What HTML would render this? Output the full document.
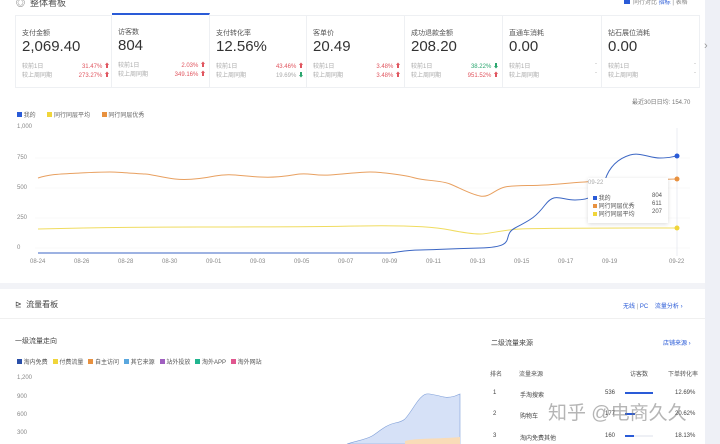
<!DOCTYPE html>
<html><head><meta charset="utf-8"><style>
*{margin:0;padding:0;box-sizing:border-box}
body{width:720px;height:444px;overflow:hidden;background:#fff;font-family:"Liberation Sans","Noto Sans CJK SC",sans-serif;position:relative;color:#333}
.a{position:absolute;white-space:nowrap}
.card{position:absolute;top:15px;height:73px;border:1px solid #eef0f3;border-left:none;background:#fff}
.card .t{position:absolute;left:6px;top:12px;font-size:7px;color:#555}
.card .v{position:absolute;left:6px;top:22px;font-size:15px;color:#333}
.card .s{position:absolute;left:6px;font-size:6px;color:#aaa;width:88px}
.card .s b{position:absolute;right:0;font-weight:normal}
.r{color:#e0555f}.g{color:#2aa56e}
.ax{font-size:6px;color:#888}
</style></head><body>
<div class="a" style="left:705px;top:0;width:15px;height:444px;background:#eef0f6"></div>
<div class="a" style="left:16px;top:-4px;font-size:9px;color:#555">◎ &nbsp;整体看板</div>
<div class="a" style="left:624px;top:-2px;width:6px;height:6px;background:#2a5bd7"></div>
<div class="a" style="left:633px;top:-3px;font-size:6px;color:#888">同行对比 <span style="color:#2a5bd7">指标</span> | 表格</div>
<div class="card" style="left:15px;width:97px;border-left:1px solid #eef0f3"><div class="t">支付金额</div><div class="v">2,069.40</div><div class="s" style="top:45px">较前1日<b class="r">31.47% ⬆</b></div><div class="s" style="top:54px">较上周同期<b class="r">273.27% ⬆</b></div></div>
<div class="card" style="left:112px;width:98px;top:13px;height:75px;border-top:2px solid #2a5bd7"><div class="t">访客数</div><div class="v">804</div><div class="s" style="top:45px">较前1日<b class="r">2.03% ⬆</b></div><div class="s" style="top:54px">较上周同期<b class="r">349.16% ⬆</b></div></div>
<div class="card" style="left:210px;width:97px"><div class="t">支付转化率</div><div class="v">12.56%</div><div class="s" style="top:45px">较前1日<b class="r">43.46% ⬆</b></div><div class="s" style="top:54px">较上周同期<b style="color:#aaa">19.69% <span class="g">⬇</span></b></div></div>
<div class="card" style="left:307px;width:98px"><div class="t">客单价</div><div class="v">20.49</div><div class="s" style="top:45px">较前1日<b class="r">3.48% ⬆</b></div><div class="s" style="top:54px">较上周同期<b class="r">3.48% ⬆</b></div></div>
<div class="card" style="left:405px;width:98px"><div class="t">成功退款金额</div><div class="v">208.20</div><div class="s" style="top:45px">较前1日<b class="g">38.22% ⬇</b></div><div class="s" style="top:54px">较上周同期<b class="r">951.52% ⬆</b></div></div>
<div class="card" style="left:503px;width:99px"><div class="t">直通车消耗</div><div class="v">0.00</div><div class="s" style="top:45px">较前1日<b>-</b></div><div class="s" style="top:54px">较上周同期<b>-</b></div></div>
<div class="card" style="left:602px;width:98px"><div class="t">钻石展位消耗</div><div class="v">0.00</div><div class="s" style="top:45px">较前1日<b>-</b></div><div class="s" style="top:54px">较上周同期<b>-</b></div></div>
<div class="a" style="left:704px;top:40px;font-size:11px;color:#999">›</div>
<div class="a" style="left:632px;top:97px;font-size:6px;color:#777">最近30日日均: 154.70</div>
<div class="a" style="left:17px;top:110px;font-size:6px;color:#666"><span style="display:inline-block;width:5px;height:5px;background:#2a5bd7"></span> 我的 &nbsp;&nbsp;&nbsp;&nbsp;&nbsp; <span style="display:inline-block;width:5px;height:5px;background:#f0d53a"></span> 同行同层平均 &nbsp;&nbsp;&nbsp;&nbsp;&nbsp; <span style="display:inline-block;width:5px;height:5px;background:#e8913f"></span> 同行同层优秀</div>
<div class="a ax" style="left:17px;top:124px">1,000</div>
<div class="a ax" style="left:17px;top:155px">750</div>
<div class="a ax" style="left:17px;top:185px">500</div>
<div class="a ax" style="left:17px;top:215px">250</div>
<div class="a ax" style="left:17px;top:245px">0</div>
<svg class="a" style="left:0;top:0" width="720" height="444">
<g stroke="#f3f3f3" stroke-width="0.6"><line x1="35" y1="158" x2="690" y2="158"/><line x1="35" y1="188" x2="690" y2="188"/><line x1="35" y1="218" x2="690" y2="218"/><line x1="35" y1="248" x2="690" y2="248"/></g>
<line x1="677" y1="128" x2="677" y2="256" stroke="#e6e9f0" stroke-width="0.8"/>
<path d="M38 178 C50 174 60 174 80 173 S100 172 110 172 S140 174 145 174 S165 178 175 179 S200 179 215 176 S240 176 260 177 S290 175 300 174 S315 176 330 175 S360 172 370 172 S405 175 415 178 S440 180 450 184 S470 194 480 196 S495 189 505 187 S530 186 545 185 S580 182 600 181 L677 179" fill="none" stroke="#e8a060" stroke-width="1"/>
<path d="M38 229 C80 228 150 227 200 227 S300 227 360 226 S440 228 450 230 S470 234 480 234 S500 230 520 229 S600 228 677 228" fill="none" stroke="#f0dc60" stroke-width="1"/>
<path d="M38 253 L390 253 C400 252 405 250 420 250 S440 249 480 248 S500 236 515 228 S535 218 545 205 S560 200 575 200 S600 195 605 180 S620 158 630 155 S650 158 660 158 S670 157 677 156" fill="none" stroke="#3b66c4" stroke-width="1"/>
<circle cx="677" cy="156" r="2.5" fill="#2a5bd7"/><circle cx="677" cy="179" r="2.5" fill="#e8913f"/><circle cx="677" cy="228" r="2.5" fill="#f0d53a"/>
<path d="M347 444 C355 441 365 440 372 436 S385 425 395 423 S405 420 415 405 S428 394 435 395 S445 399 455 396 L460 394 L460 444Z" fill="#d6e1f7" stroke="#7f9fd8" stroke-width="0.6"/>
<path d="M405 444 L405 441 C415 438 440 439 460 437 L460 444Z" fill="#f9dcb8"/>
</svg>
<div class="a" style="left:588px;top:178px;width:80px;height:45px;background:#fff;box-shadow:0 1px 4px rgba(0,0,0,.15);font-size:6px;color:#555">
<div class="a" style="left:0;top:2px;color:#aaa">09-22</div>
<div class="a" style="left:5px;top:15px"><span style="display:inline-block;width:4px;height:4px;background:#2a5bd7"></span> 我的</div><div class="a" style="left:64px;top:15px">804</div>
<div class="a" style="left:5px;top:23px"><span style="display:inline-block;width:4px;height:4px;background:#e8913f"></span> 同行同层优秀</div><div class="a" style="left:64px;top:23px">611</div>
<div class="a" style="left:5px;top:31px"><span style="display:inline-block;width:4px;height:4px;background:#f0d53a"></span> 同行同层平均</div><div class="a" style="left:64px;top:31px">207</div>
</div>
<div class="a ax" style="left:30px;top:259px;width:670px">
<span class="a" style="left:0">08-24</span><span class="a" style="left:44px">08-26</span><span class="a" style="left:88px">08-28</span><span class="a" style="left:132px">08-30</span><span class="a" style="left:176px">09-01</span><span class="a" style="left:220px">09-03</span><span class="a" style="left:264px">09-05</span><span class="a" style="left:308px">09-07</span><span class="a" style="left:352px">09-09</span><span class="a" style="left:396px">09-11</span><span class="a" style="left:440px">09-13</span><span class="a" style="left:484px">09-15</span><span class="a" style="left:528px">09-17</span><span class="a" style="left:572px">09-19</span><span class="a" style="left:639px">09-22</span></div>
<div class="a" style="left:0;top:283px;width:705px;height:6px;background:#f2f3f7"></div>
<div class="a" style="left:15px;top:299px;font-size:8px;color:#444">⊵ &nbsp;流量看板</div>
<div class="a" style="left:623px;top:301px;font-size:6px;color:#2a5bd7">无线 <span style="color:#999">|</span> PC &nbsp;&nbsp; 流量分析 ›</div>
<div class="a" style="left:0;top:318px;width:705px;height:1px;background:#f0f0f0"></div>
<div class="a" style="left:15px;top:336px;font-size:7px;color:#444">一级流量走向</div>
<div class="a" style="left:17px;top:357px;font-size:6px;color:#555">
<span style="display:inline-block;width:5px;height:5px;background:#2a4fa8"></span> 淘内免费 &nbsp;&nbsp;<span style="display:inline-block;width:5px;height:5px;background:#f0d53a"></span> 付费流量 &nbsp;&nbsp;<span style="display:inline-block;width:5px;height:5px;background:#e8913f"></span> 自主访问 &nbsp;&nbsp;<span style="display:inline-block;width:5px;height:5px;background:#5aa7de"></span> 其它来源 &nbsp;&nbsp;<span style="display:inline-block;width:5px;height:5px;background:#a05fc0"></span> 站外投放 &nbsp;&nbsp;<span style="display:inline-block;width:5px;height:5px;background:#20b58f"></span> 淘外APP &nbsp;&nbsp;<span style="display:inline-block;width:5px;height:5px;background:#e0568f"></span> 淘外网站</div>
<div class="a ax" style="left:17px;top:375px">1,200</div>
<div class="a ax" style="left:17px;top:394px">900</div>
<div class="a ax" style="left:17px;top:412px">600</div>
<div class="a ax" style="left:17px;top:430px">300</div>
<div class="a" style="left:491px;top:338px;font-size:7px;color:#444">二级流量来源</div>
<div class="a" style="left:663px;top:338px;font-size:6px;color:#2a5bd7">店铺来源 ›</div>
<div class="a" style="left:490px;top:369px;font-size:6px;color:#555;width:210px">
<span class="a" style="left:0">排名</span><span class="a" style="left:29px">流量来源</span><span class="a" style="left:140px">访客数</span><span class="a" style="left:178px">下单转化率</span></div>
<div class="a" style="left:490px;top:390px;font-size:6px;color:#444;width:210px"><span class="a" style="left:3px">1</span><span class="a" style="left:30px">手淘搜索</span><span class="a" style="left:115px">536</span><span class="a" style="left:135px;top:2px;width:28px;height:2px;background:#2a5bd7"></span><span class="a" style="left:185px">12.69%</span></div>
<div class="a" style="left:490px;top:411px;font-size:6px;color:#444;width:210px"><span class="a" style="left:3px">2</span><span class="a" style="left:30px">购物车</span><span class="a" style="left:115px">177</span><span class="a" style="left:135px;top:2px;width:10px;height:2px;background:#2a5bd7"></span><span class="a" style="left:185px">20.62%</span></div>
<div class="a" style="left:490px;top:433px;font-size:6px;color:#444;width:210px"><span class="a" style="left:3px">3</span><span class="a" style="left:30px">淘内免费其他</span><span class="a" style="left:115px">160</span><span class="a" style="left:135px;top:2px;width:28px;height:2px;background:#eef0f5"></span><span class="a" style="left:135px;top:2px;width:9px;height:2px;background:#2a5bd7"></span><span class="a" style="left:185px">18.13%</span></div>
<div class="a" style="left:548px;top:398px;font-size:19px;color:rgba(120,120,120,.55)">知乎 @电商久久</div>
</body></html>
